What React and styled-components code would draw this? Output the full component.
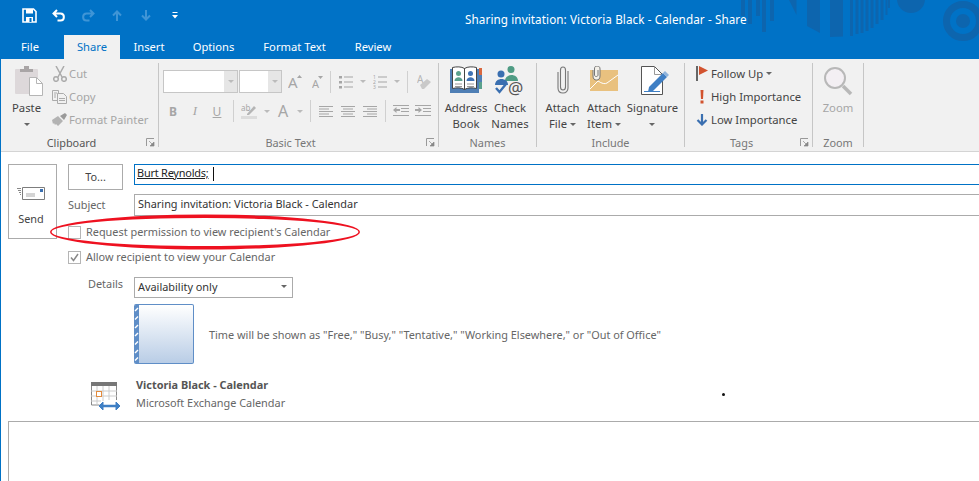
import React from 'react';
import styled, { createGlobalStyle } from 'styled-components';

const Global = createGlobalStyle`
  html, body { margin: 0; padding: 0; background: #fff; overflow: hidden; }
  body { font-family: "Noto Sans", "Open Sans", sans-serif; font-size: 10.9px; color: #444; }
`;

const Page = styled.div`
  width: 979px;
  height: 481px;
  position: relative;
  overflow: hidden;
  border-left: 1px solid #0072c6;
  box-sizing: border-box;
`;

const Header = styled.div`
  height: 59px;
  margin-left: -1px;
  background: #0072c6;
  position: relative;
  display: flex;
  flex-direction: column;
`;

const Pattern = styled.svg`
  position: absolute;
  top: 0;
  right: 0;
`;

const TitleRow = styled.div`
  height: 35px;
  display: flex;
  align-items: center;
  position: relative;
`;

const Quick = styled.div`
  width: 465px;
  display: flex;
  padding-left: 15px;
  box-sizing: border-box;
  margin-top: -5px;
`;

const QuickCell = styled.div`
  width: 29px;
  height: 16px;
  display: flex;
  align-items: center;
  justify-content: center;
`;

const Title = styled.div`
  color: #fff;
  font-size: 11.7px;
  letter-spacing: 0.09px;
  white-space: nowrap;
  margin-top: 2px;
`;

const Tabs = styled.div`
  height: 24px;
  display: flex;
  position: relative;
`;

const Tab = styled.div`
  width: ${p => p.$w}px;
  height: 24px;
  line-height: 24px;
  text-align: center;
  padding-right: ${p => p.$pr || 0}px;
  box-sizing: border-box;
  color: ${p => (p.$active ? '#0072c6' : '#fff')};
  background: ${p => (p.$active ? '#f1f1f1' : 'transparent')};
  font-size: 11.2px;
  white-space: nowrap;
`;

const Ribbon = styled.div`
  height: 93px;
  background: #f1f1f1;
  border-bottom: 1px solid #d4d4d4;
  box-sizing: border-box;
  display: flex;
  padding-top: 4px;
`;

const Group = styled.div`
  width: ${p => p.$w}px;
  height: 84px;
  border-right: 1px solid #c6c6c6;
  box-sizing: border-box;
  position: relative;
  display: flex;
  flex-direction: column;
`;

const GroupBody = styled.div`
  height: 74px;
  display: flex;
  padding-left: ${p => p.$pl || 0}px;
  font-size: 11.3px;
`;

const GroupLabel = styled.div`
  height: 10px;
  line-height: 12px;
  text-align: center;
  font-size: 10.9px;
  color: ${p => (p.$dim ? '#777' : '#555')};
  padding-right: ${p => p.$pr || 0}px;
`;

const Launcher = styled.svg`
  position: absolute;
  right: 3px;
  bottom: 0;
`;

const Big = styled.div`
  width: ${p => p.$w}px;
  display: flex;
  flex-direction: column;
  align-items: center;
  color: ${p => (p.$dim ? '#a6a6a6' : '#444')};
  line-height: 16px;
  text-align: center;
  white-space: nowrap;
`;

const BigIcon = styled.div`
  height: 37px;
  padding: 3px 0 0 ${p => p.$pl || 0}px;
  box-sizing: border-box;
  display: flex;
  justify-content: center;
  align-items: flex-start;
`;

const Small = styled.div`
  height: 23px;
  display: flex;
  align-items: center;
  color: ${p => (p.$dim ? '#a6a6a6' : '#444')};
  white-space: nowrap;
`;

const SmallSlot = styled.span`
  width: ${p => p.$w}px;
  padding-right: ${p => p.$pr || 0}px;
  box-sizing: border-box;
  display: flex;
  align-items: center;
  justify-content: center;
  flex: none;
`;

const SmallStack = styled.div`
  display: flex;
  flex-direction: column;
  margin: -1px 0 0 ${p => p.$ml || 0}px;
`;

const Caret = styled.span`
  display: inline-block;
  width: 0;
  height: 0;
  border-left: 3px solid transparent;
  border-right: 3px solid transparent;
  border-top: 3px solid ${p => p.$color || '#666'};
  margin-left: ${p => p.$ml || 0}px;
  vertical-align: middle;
  flex: none;
`;

const FontRow = styled.div`
  display: flex;
  align-items: center;
  height: 23px;
  margin-top: 7px;
`;

const FormatRow = styled.div`
  display: flex;
  align-items: center;
  height: 22px;
  margin-top: 7px;
  color: #a6a6a6;
`;

const FontBox = styled.div`
  width: ${p => p.$w}px;
  height: 23px;
  margin-left: ${p => p.$ml || 0}px;
  background: #fff;
  border: 1px solid #c6c6c6;
  box-sizing: border-box;
  display: flex;
  justify-content: flex-end;
`;

const FontDrop = styled.div`
  width: 13px;
  background: #e6e6e6;
  display: flex;
  align-items: center;
  justify-content: center;
`;

const Tool = styled.span`
  display: flex;
  flex: none;
  margin-left: ${p => p.$ml || 0}px;
`;

const Letter = styled.span`
  width: ${p => p.$w}px;
  text-align: center;
  flex: none;
  font-size: ${p => p.$size || 12}px;
  font-weight: ${p => (p.$bold ? 700 : 400)};
  font-style: ${p => (p.$italic ? 'italic' : 'normal')};
  text-decoration: ${p => (p.$under ? 'underline' : 'none')};
  color: #a6a6a6;
  font-family: ${p => (p.$serif ? '"Liberation Serif", serif' : 'inherit')};
`;

const Sep = styled.span`
  width: 1px;
  height: 22px;
  background: #d0d0d0;
  flex: none;
  margin-left: ${p => p.$ml || 0}px;
`;

const Form = styled.div`
  position: relative;
  display: grid;
  grid-template-columns: 49px 1fr;
  column-gap: 11px;
  padding: 12px 0 0 7px;
  height: 269px;
  box-sizing: border-box;
`;

const Send = styled.div`
  height: 75px;
  border: 1px solid #ababab;
  box-sizing: border-box;
  display: flex;
  flex-direction: column;
  align-items: center;
  padding: 21px 3px 0 0;
  gap: 10px;
  color: #444;
`;

const Fields = styled.div`
  display: flex;
  flex-direction: column;
`;

const Row = styled.div`
  display: flex;
  align-items: ${p => p.$align || 'center'};
  height: ${p => p.$h}px;
  margin-top: ${p => p.$mt || 0}px;
`;

const ToButton = styled.div`
  width: 55px;
  height: 26px;
  border: 1px solid #ababab;
  box-sizing: border-box;
  text-align: center;
  line-height: 23px;
  margin-right: 11px;
  color: #444;
`;

const ToInput = styled.div`
  flex: 1;
  height: 21px;
  border: 1px solid #0072c6;
  border-right: 0;
  box-sizing: border-box;
  padding: 0 0 5px 2px;
  color: #222;
  display: flex;
  align-items: center;
  gap: 4px;
  letter-spacing: -0.2px;
`;

const Recipient = styled.span`
  text-decoration: underline;
`;

const TextCursor = styled.span`
  width: 1px;
  height: 14px;
  background: #111;
  margin-top: 4px;
`;

const FieldLabel = styled.div`
  width: 66px;
  color: #666;
  padding: 0 0 ${p => p.$pb || 0}px ${p => p.$pl || 0}px;
  box-sizing: border-box;
`;

const SubjectInput = styled.div`
  flex: 1;
  height: 22px;
  border: 1px solid #ababab;
  border-right: 0;
  box-sizing: border-box;
  line-height: 17px;
  padding-left: 3px;
  color: #333;
`;

const CheckRow = styled.div`
  display: flex;
  align-items: center;
  gap: 5px;
  height: 13px;
  margin-top: ${p => p.$mt}px;
  color: #666;
`;

const CheckText = styled.span`
  padding-bottom: 2px;
`;

const Box = styled.div`
  width: 13px;
  height: 13px;
  border: 1px solid #b5b5b5;
  box-sizing: border-box;
  display: flex;
  align-items: center;
  justify-content: center;
`;

const Select = styled.div`
  width: 159px;
  height: 21px;
  border: 1px solid #ababab;
  box-sizing: border-box;
  display: flex;
  align-items: center;
  justify-content: space-between;
  padding: 0 5px 2px 3px;
  color: #333;
`;

const Tile = styled.div`
  width: 60px;
  height: 60px;
  box-sizing: border-box;
  border: 1px solid #5f8ec7;
  border-left: 0;
  border-radius: 2px;
  background: linear-gradient(#ffffff, #b9cde6);
  overflow: hidden;
  flex: none;
  margin-left: 66px;
  display: flex;
`;

const TileNote = styled.div`
  margin-left: 15px;
  color: #666;
  white-space: nowrap;
`;

const CalRow = styled.div`
  display: flex;
  margin: 18px 0 0 22px;
`;

const CalText = styled.div`
  margin: -5px 0 0 16px;
  display: flex;
  flex-direction: column;
  gap: 2px;
  line-height: 16px;
  color: #666;
`;

const CalName = styled.div`
  font-weight: 700;
  color: #555;
`;

const Body = styled.div`
  margin-left: 7px;
  height: 60px;
  border: 1px solid #ababab;
  border-right: 0;
  border-bottom: 0;
  box-sizing: border-box;
`;

const Ellipse = styled.svg`
  position: absolute;
  left: 47px;
  top: 62px;
`;

const Speck = styled.div`
  position: absolute;
  left: 721px;
  top: 241px;
  width: 3px;
  height: 3px;
  background: #111;
  border-radius: 50%;
`;

const SaveIcon = () => (
  <svg width="15" height="15" viewBox="0 0 15 15">
    <path d="M1 1h10.500l2.500 2.500V14H1z" fill="none" stroke="#fff" strokeWidth="1.600" />
    <rect x="4" y="1" width="7" height="4.500" fill="#fff" />
    <rect x="4" y="9" width="7" height="5" fill="#fff" />
    <rect x="7.500" y="10" width="2" height="4" fill="#0072c6" />
  </svg>
);

const UndoIcon = ({ color = '#fff', flip }) => (
  <svg width="14" height="13" viewBox="0 0 14 13" style={flip ? { transform: 'scaleX(-1)' } : undefined}>
    <path d="M5 1 1.500 4.500 5 8M2 4.500h6.500c4.500 0 4.500 7 0 7H5.500" fill="none" stroke={color} strokeWidth="2" />
  </svg>
);

const ArrowIcon = ({ down }) => (
  <svg width="10" height="11" viewBox="0 0 10 11" style={down ? { transform: 'scaleY(-1)' } : undefined}>
    <path d="M5 11V1.500M1 5.500l4-4 4 4" fill="none" stroke="#3f95d6" strokeWidth="2" />
  </svg>
);

const CustomizeIcon = () => (
  <svg width="6" height="7" viewBox="0 0 6 7">
    <rect x="0.500" y="0" width="5" height="1" fill="#fff" />
    <path d="M0 3h6L3 6.500z" fill="#fff" />
  </svg>
);

const LauncherIcon = () => (
  <Launcher width="9" height="9" viewBox="0 0 9 9">
    <path d="M.5 8V.5H8" fill="none" stroke="#999" />
    <path d="M3 3l4 4M8 4v4H4z" fill="#888" stroke="#888" strokeWidth=".7" />
  </Launcher>
);

const PasteIcon = () => (
  <svg width="28" height="30" viewBox="0 0 28 30">
    <rect x="0" y="3" width="23" height="25" rx="1" fill="#ddd8da" />
    <path d="M5 6V3h4V0h5v3h4v3z" fill="#a9a5a6" />
    <path d="M14.500 11.500h7l6 6v12h-13z" fill="#fff" stroke="#b5b5b5" />
    <path d="M21.500 11.500v6h6" fill="none" stroke="#b5b5b5" />
  </svg>
);

const CutIcon = () => (
  <svg width="14" height="16" viewBox="0 0 14 16" fill="none" stroke="#ababab" strokeWidth="1.500">
    <path d="M3 0l6 11M11 0 5 11" />
    <circle cx="3" cy="13" r="2.300" />
    <circle cx="11" cy="13" r="2.300" />
  </svg>
);

const CopyIcon = () => (
  <svg width="15" height="14" viewBox="0 0 15 14" fill="#f1f1f1" stroke="#ababab">
    <path d="M.5.500h6v10h-6z" />
    <path d="M5.500 3.500h6l3 3v7h-9z" />
    <path d="M2 3h3M2 5h2M2 7h2M7 8.500h6M7 10.500h6" />
  </svg>
);

const BrushIcon = () => (
  <svg width="16" height="13" viewBox="0 0 16 13">
    <path d="M0 7 6 3l5 5-5 5-2-2-1 1-1-2-1 1z" fill="#b3b3b3" />
    <path d="M8 3l5-3 2 2-3 5z" fill="#9a9a9a" />
  </svg>
);

const GrowIcon = ({ size, up, w }) => (
  <svg width={w} height="24" viewBox={`0 -5 ${w} 24`}>
    <text x="0" y="13" fontSize={size} fill="#a6a6a6" fontFamily="Noto Sans">A</text>
    <path d={up ? `M${w - 5} 3l2.500-3 2.500 3z` : `M${w - 5} 1h5l-2.500 3z`} fill="#a6a6a6" />
  </svg>
);

const ListIcon = ({ numbered }) => (
  <svg width="15" height="14" viewBox="0 0 15 14">
    {[1, 6, 11].map((y, i) => numbered ? (
      <text key={y} x="0" y={y + 2.5} fontSize="5" fill="#a6a6a6">{i + 1}</text>
    ) : (
      <rect key={y} x="0" y={y} width="3" height="2.500" fill="#a6a6a6" />
    ))}
    {[2, 7, 12].map(y => <rect key={y} x="5" y={y - 0.5} width="9" height="1" fill="#a6a6a6" />)}
  </svg>
);

const AlignIcon = ({ side }) => {
  const rows = [14, 10, 14, 10, 14];
  return (
    <svg width="14" height="11" viewBox="0 0 14 11">
      {rows.map((w, i) => (
        <rect
          key={i}
          x={side === 'left' ? 0 : side === 'center' ? (14 - w) / 2 : 14 - w}
          y={i * 2.5}
          width={w}
          height="1"
          fill="#a6a6a6"
        />
      ))}
    </svg>
  );
};

const IndentIcon = ({ out }) => (
  <svg width="16" height="12" viewBox="0 0 16 12">
    <path d="M0 .5h16M8 3.500h8M8 6.500h8M0 10.500h16" stroke="#a6a6a6" fill="none" />
    <path d={out ? 'M0 5l3.500-3v2H7v2H3.500v2z' : 'M7 5 3.500 2v2H0v2h3.500v2z'} fill="#a6a6a6" />
  </svg>
);

const EraserIcon = () => (
  <svg width="15" height="22" viewBox="0 -3 15 22">
    <text x="0" y="9" fontSize="10" fill="#b5b5b5" fontFamily="Noto Sans">A</text>
    <path d="M3 11l7-6 4 3-7 7H5z" fill="#c9c9c9" />
  </svg>
);

const HighlightIcon = () => (
  <svg width="16" height="16" viewBox="0 0 16 16">
    <text x="0" y="8" fontSize="8" fill="#a6a6a6" fontFamily="Noto Sans">ab</text>
    <path d="M6 11 13 3l2 2-7 7H6z" fill="#b5b5b5" />
    <rect x="0" y="13" width="16" height="3" fill="#dcdcdc" />
  </svg>
);

const AddressBookIcon = () => (
  <svg width="32" height="27" viewBox="0 0 32 27">
    <rect x="0" y="3" width="29" height="24" fill="#4f7fb5" />
    <path d="M2.500 1.500c4-1 9-1 12 1v21c-3-2-8-2-12-1zM14.500 2.500c3-2 8-2 12-1v21c-4-1-9-1-12 1z" fill="#fff" stroke="#444" />
    <rect x="29" y="2" width="3" height="7" fill="#d9683f" />
    <rect x="29" y="9" width="3" height="7" fill="#4f7fb5" />
    <rect x="29" y="16" width="3" height="7" fill="#5aa18c" />
    <circle cx="8.500" cy="7.500" r="2.500" fill="#5aa18c" />
    <path d="M4.500 15c0-5 8-5 8 0z" fill="#5aa18c" />
    <circle cx="20.500" cy="7.500" r="2.500" fill="#3f73b5" />
    <path d="M16.500 15c0-5 8-5 8 0z" fill="#3f73b5" />
    <path d="M5 18h7M5 20.500h7M17 18h7M17 20.500h7" stroke="#999" />
  </svg>
);

const CheckNamesIcon = () => (
  <svg width="31" height="36" viewBox="0 0 31 36">
    <circle cx="16" cy="3.500" r="3.500" fill="#4f9c84" />
    <path d="M10 15c0-8 13-8 13 0z" fill="#4f9c84" />
    <circle cx="6" cy="8" r="3.500" fill="#3a6fb0" />
    <path d="M0 19c0-8 13-8 13 0z" fill="#3a6fb0" />
    <path d="M1 22l3.500 4 6.500-8" fill="none" stroke="#3a6fb0" strokeWidth="2.400" />
    <text x="13" y="28" fontSize="17" fill="#555" fontFamily="Noto Sans">@</text>
  </svg>
);

const ClipIcon = () => (
  <svg width="12" height="28" viewBox="0 0 12 28" fill="none" stroke="#777" strokeWidth="1.100">
    <path d="M3.500 7v14c0 2 1 3 2.500 3s2.500-1 2.500-3V4C8.500 2 7.500 1 6 1S3.500 2 3.500 4v3" />
    <path d="M1 6v16c0 3 2 5 5 5s5-2 5-5V5" />
  </svg>
);

const AttachItemIcon = () => (
  <svg width="29" height="26" viewBox="0 0 29 26">
    <rect x="0" y="4" width="28" height="21" fill="#e9c17f" />
    <path d="M0 23 8 15q6 4 9 2l11-8" fill="none" stroke="#fff" strokeWidth="1" />
    <path d="M3 4v6c0 3 1.500 4 3.500 4S10 13 10 10V3C10 1 9 0 7 0S4.500 1 4.500 3v6c0 2 3.500 2 3.500 0V4" fill="#f4f1ea" stroke="#777" />
  </svg>
);

const SignatureIcon = () => (
  <svg width="28" height="30" viewBox="0 0 28 30">
    <path d="M.5.500h13l8 8v20H.500z" fill="#fff" stroke="#555" />
    <path d="M13.500.500v8h8" fill="none" stroke="#999" />
    <path d="M8 21 22 7l4 4-14 14-5 1z" fill="#3f7fc4" />
    <path d="M22 7l2-2 4 4-2 2z" fill="#8fb4dc" />
    <path d="M3 25.500h16" stroke="#3f7fc4" />
  </svg>
);

const FlagIcon = () => (
  <svg width="12" height="15" viewBox="0 0 12 15">
    <rect x="0" y="0" width="2" height="15" fill="#666" />
    <path d="M3 0l9 4.500L3 9z" fill="#d2532f" />
  </svg>
);

const ImportantIcon = () => (
  <svg width="12" height="14" viewBox="0 0 12 14">
    <path d="M4.500 0h3L7 9H5z" fill="#d2532f" />
    <rect x="4.500" y="10.500" width="3" height="3" fill="#d2532f" />
  </svg>
);

const LowIcon = () => (
  <svg width="12" height="12" viewBox="0 0 12 12">
    <path d="M6 0v10M1.500 6 6 10.500 10.500 6" fill="none" stroke="#3a6fb0" strokeWidth="2.200" />
  </svg>
);

const ZoomIcon = () => (
  <svg width="30" height="30" viewBox="0 0 30 30">
    <circle cx="12" cy="12" r="10" fill="#f3eff3" stroke="#b8b8b8" strokeWidth="2" />
    <path d="M20 20l8 8" stroke="#b8b8b8" strokeWidth="3.500" />
  </svg>
);

const SendIcon = () => (
  <svg width="28" height="15" viewBox="0 0 28 15">
    <path d="M5.500 1.500h22v12h-22z" fill="#fff" stroke="#7d7d7d" />
    <rect x="23" y="3" width="3" height="3" fill="#3a6fb0" />
    <path d="M9 8h9M9 10h9" stroke="#aaa" />
    <path d="M0 2.500h4M1 4.500h3M2 6.500h2M3 8.500h1" stroke="#888" />
  </svg>
);

const CalendarIcon = () => (
  <svg width="30" height="30" viewBox="0 0 30 30">
    <rect x="1" y="0" width="26" height="4" fill="#777" />
    <path d="M1.500 4v19h8M26.500 4v14" fill="none" stroke="#888" />
    <path d="M7 4v19M13 4v15M19 4v14M1 9h26M1 14h26M1 19h10" stroke="#ccc" fill="none" />
    <rect x="6.500" y="9.500" width="5" height="5" fill="#fff" stroke="#e38b3d" />
    <path d="M12 24h15" stroke="#3f7fc4" strokeWidth="2.500" />
    <path d="M13 20l-4 4 4 4zM26 20l4 4-4 4z" fill="#3f7fc4" stroke="#3f7fc4" />
  </svg>
);

const TileStripe = () => (
  <svg width="5" height="60" viewBox="0 0 5 60">
    <rect width="5" height="60" fill="#5f8ec7" />
    {[3, 11.500, 20, 28, 36.500, 45, 52.500].map(y => (
      <path key={y} d={`M1 ${y + 3}l3-3`} stroke="#fff" strokeWidth="1.500" />
    ))}
  </svg>
);

const Pat = () => (
  <Pattern width="249" height="45" viewBox="0 0 249 45">
    <g fill="#0d65ae">
      <rect x="11" y="0" width="4" height="16" />
      <rect x="18" y="0" width="4" height="24" />
      <rect x="26" y="0" width="4" height="16" />
      <rect x="32" y="0" width="4" height="32" />
      <rect x="40" y="0" width="4" height="21" />
      <path d="M59 0h7.500v15z" />
      <path d="M77 0h13v33l-13-7z" />
      <path d="M100 0h13v36.500l-13 .5z" />
      <rect x="120" y="0" width="3" height="36" />
      <rect x="125.500" y="0" width="3" height="34" />
      <rect x="130.500" y="0" width="3" height="33" />
      <rect x="135.500" y="0" width="3" height="31" />
      <rect x="140.500" y="0" width="3" height="28" />
      <rect x="145.500" y="0" width="3" height="24" />
      <rect x="150.500" y="0" width="3" height="20" />
      <rect x="155.500" y="0" width="2" height="15" />
      <rect x="158" y="0" width="2" height="8" />
      <circle cx="181" cy="-1" r="14" />
      <circle cx="233" cy="21" r="7" />
    </g>
    <circle cx="233" cy="21" r="16.500" fill="none" stroke="#0d65ae" strokeWidth="7" />
  </Pattern>
);

export default function App() {
  return (
    <Page>
      <Global />
      <Header>
        <Pat />
        <TitleRow>
          <Quick>
            <QuickCell><SaveIcon /></QuickCell>
            <QuickCell><UndoIcon /></QuickCell>
            <QuickCell><UndoIcon color="#3f95d6" flip /></QuickCell>
            <QuickCell><ArrowIcon /></QuickCell>
            <QuickCell><ArrowIcon down /></QuickCell>
            <QuickCell><CustomizeIcon /></QuickCell>
          </Quick>
          <Title>Sharing invitation: Victoria Black - Calendar - Share</Title>
        </TitleRow>
        <Tabs>
          <Tab $w={64} $pr={4}>File</Tab>
          <Tab $w={56} $active>Share</Tab>
          <Tab $w={58}>Insert</Tab>
          <Tab $w={71}>Options</Tab>
          <Tab $w={91}>Format Text</Tab>
          <Tab $w={66}>Review</Tab>
        </Tabs>
      </Header>

      <Ribbon>
        <Group $w={158}>
          <GroupBody $pl={9}>
            <Big $w={33}>
              <BigIcon $pl={4}><PasteIcon /></BigIcon>
              <span>Paste</span>
              <span><Caret /></span>
            </Big>
            <SmallStack $ml={7}>
              <Small $dim><SmallSlot $w={19}><CutIcon /></SmallSlot>Cut</Small>
              <Small $dim><SmallSlot $w={19}><CopyIcon /></SmallSlot>Copy</Small>
              <Small $dim><SmallSlot $w={19}><BrushIcon /></SmallSlot>Format Painter</Small>
            </SmallStack>
          </GroupBody>
          <GroupLabel $pr={16}>Clipboard</GroupLabel>
          <LauncherIcon />
        </Group>

        <Group $w={280}>
          <GroupBody $pl={4}>
            <div>
              <FontRow>
                <FontBox $w={75}><FontDrop><Caret $color="#bbb" /></FontDrop></FontBox>
                <FontBox $w={43} $ml={1}><FontDrop><Caret $color="#bbb" /></FontDrop></FontBox>
                <Tool $ml={6}><GrowIcon size={15} up w={14} /></Tool>
                <Tool $ml={10}><GrowIcon size={11} w={11} /></Tool>
                <Sep $ml={7} />
                <Tool $ml={8}><ListIcon /></Tool>
                <Caret $color="#bbb" $ml={6} />
                <Tool $ml={7}><ListIcon numbered /></Tool>
                <Caret $color="#bbb" $ml={6} />
                <Sep $ml={7} />
                <Tool $ml={9}><EraserIcon /></Tool>
              </FontRow>
              <FormatRow>
                <Letter $w={20} $bold>B</Letter>
                <Letter $w={24} $italic $serif $size={13}>I</Letter>
                <Letter $w={20} $under>U</Letter>
                <Sep $ml={6} />
                <Tool $ml={7}><HighlightIcon /></Tool>
                <Caret $color="#bbb" $ml={7} />
                <Letter $w={26} $size={16}>A</Letter>
                <Caret $color="#bbb" $ml={1} />
                <Sep $ml={7} />
                <Tool $ml={8}><AlignIcon side="left" /></Tool>
                <Tool $ml={8}><AlignIcon side="center" /></Tool>
                <Tool $ml={8}><AlignIcon side="right" /></Tool>
                <Sep $ml={8} />
                <Tool $ml={7}><IndentIcon out /></Tool>
                <Tool $ml={6}><IndentIcon /></Tool>
              </FormatRow>
            </div>
          </GroupBody>
          <GroupLabel $dim $pr={16}>Basic Text</GroupLabel>
          <LauncherIcon />
        </Group>

        <Group $w={98}>
          <GroupBody $pl={5}>
            <Big $w={44}>
              <BigIcon><AddressBookIcon /></BigIcon>
              <span>Address<br />Book</span>
            </Big>
            <Big $w={44}>
              <BigIcon><CheckNamesIcon /></BigIcon>
              <span>Check<br />Names</span>
            </Big>
          </GroupBody>
          <GroupLabel $dim>Names</GroupLabel>
        </Group>

        <Group $w={148}>
          <GroupBody $pl={5}>
            <Big $w={41}>
              <BigIcon><ClipIcon /></BigIcon>
              <span>Attach<br />File <Caret /></span>
            </Big>
            <Big $w={42}>
              <BigIcon><AttachItemIcon /></BigIcon>
              <span>Attach<br />Item <Caret /></span>
            </Big>
            <Big $w={55}>
              <BigIcon $pl={5}><SignatureIcon /></BigIcon>
              <span>Signature<br /><Caret /></span>
            </Big>
          </GroupBody>
          <GroupLabel $dim>Include</GroupLabel>
        </Group>

        <Group $w={128}>
          <GroupBody $pl={10}>
            <SmallStack>
              <Small><SmallSlot $w={16} $pr={3}><FlagIcon /></SmallSlot>Follow Up&nbsp;<Caret /></Small>
              <Small><SmallSlot $w={16} $pr={3}><ImportantIcon /></SmallSlot>High Importance</Small>
              <Small><SmallSlot $w={16} $pr={3}><LowIcon /></SmallSlot>Low Importance</Small>
            </SmallStack>
          </GroupBody>
          <GroupLabel $dim $pr={14}>Tags</GroupLabel>
          <LauncherIcon />
        </Group>

        <Group $w={51}>
          <GroupBody>
            <Big $w={50} $dim>
              <BigIcon><ZoomIcon /></BigIcon>
              <span>Zoom</span>
            </Big>
          </GroupBody>
          <GroupLabel $dim>Zoom</GroupLabel>
        </Group>
      </Ribbon>

      <Form>
        <Send>
          <SendIcon />
          <span>Send</span>
        </Send>
        <Fields>
          <Row $h={26} $align="flex-start">
            <ToButton>To...</ToButton>
            <ToInput><Recipient>Burt Reynolds;</Recipient><TextCursor /></ToInput>
          </Row>
          <Row $h={22} $mt={4}>
            <FieldLabel $pb={2}>Subject</FieldLabel>
            <SubjectInput>Sharing invitation: Victoria Black - Calendar</SubjectInput>
          </Row>
          <CheckRow $mt={10}>
            <Box />
            <CheckText>Request permission to view recipient's Calendar</CheckText>
          </CheckRow>
          <CheckRow $mt={12}>
            <Box>
              <svg width="9" height="9" viewBox="0 0 9 9">
                <path d="M1 4.500 3.500 7.500 8 1" fill="none" stroke="#888" strokeWidth="1.500" />
              </svg>
            </Box>
            <CheckText>Allow recipient to view your Calendar</CheckText>
          </CheckRow>
          <Row $h={21} $mt={13}>
            <FieldLabel $pl={20} $pb={8}>Details</FieldLabel>
            <Select>Availability only<Caret /></Select>
          </Row>
          <Row $h={60} $mt={6}>
            <Tile><TileStripe /></Tile>
            <TileNote>Time will be shown as "Free," "Busy," "Tentative," "Working Elsewhere," or "Out of Office"</TileNote>
          </Row>
          <CalRow>
            <CalendarIcon />
            <CalText>
              <CalName>Victoria Black - Calendar</CalName>
              <span>Microsoft Exchange Calendar</span>
            </CalText>
          </CalRow>
        </Fields>
        <Ellipse width="320" height="36" viewBox="0 0 320 36">
          <path
            fillRule="evenodd"
            d="M2 18a155 17.500 0 1 0 310 0a155 17.500 0 1 0-310 0zM3.500 18a153.500 14 0 1 0 307 0a153.500 14 0 1 0-307 0z"
            fill="#ee1120"
          />
        </Ellipse>
        <Speck />
      </Form>
      <Body />
    </Page>
  );
}
